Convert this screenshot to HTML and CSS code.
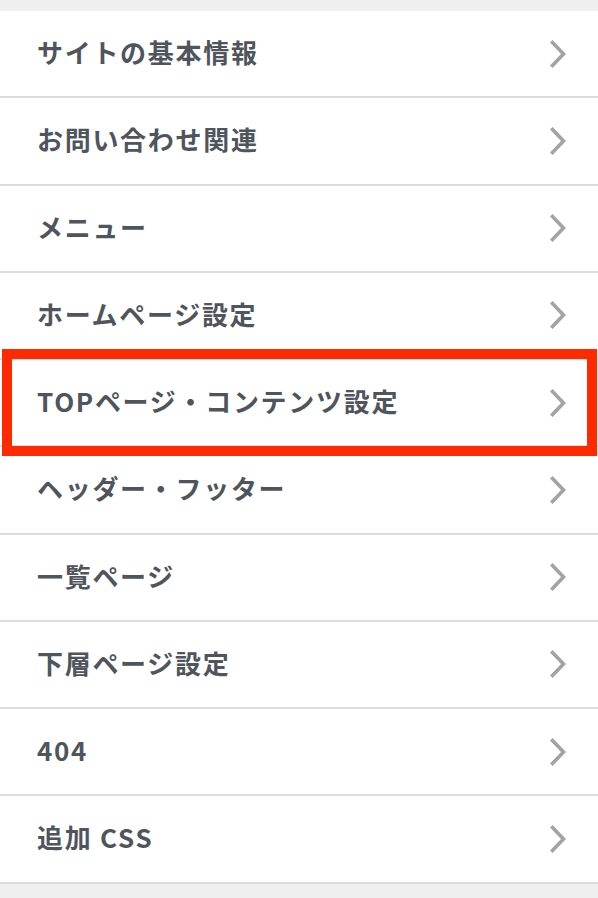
FILE: index.html
```html
<!DOCTYPE html>
<html lang="ja">
<head>
<meta charset="utf-8">
<title>設定メニュー</title>
<link rel="stylesheet" href="styles.css">
</head>
<body>
<ul class="menu">
  <li class="item"><span class="label">サイトの基本情報</span><svg class="chev" viewBox="0 0 16 28"><polyline points="2.5,2.5 13.5,14 2.5,25.5"/></svg></li>
  <li class="item"><span class="label">お問い合わせ関連</span><svg class="chev" viewBox="0 0 16 28"><polyline points="2.5,2.5 13.5,14 2.5,25.5"/></svg></li>
  <li class="item"><span class="label">メニュー</span><svg class="chev" viewBox="0 0 16 28"><polyline points="2.5,2.5 13.5,14 2.5,25.5"/></svg></li>
  <li class="item"><span class="label">ホームページ設定</span><svg class="chev" viewBox="0 0 16 28"><polyline points="2.5,2.5 13.5,14 2.5,25.5"/></svg></li>
  <li class="item highlighted"><span class="label">TOPページ・コンテンツ設定</span><svg class="chev" viewBox="0 0 16 28"><polyline points="2.5,2.5 13.5,14 2.5,25.5"/></svg><span class="mark"></span></li>
  <li class="item"><span class="label">ヘッダー・フッター</span><svg class="chev" viewBox="0 0 16 28"><polyline points="2.5,2.5 13.5,14 2.5,25.5"/></svg></li>
  <li class="item"><span class="label">一覧ページ</span><svg class="chev" viewBox="0 0 16 28"><polyline points="2.5,2.5 13.5,14 2.5,25.5"/></svg></li>
  <li class="item"><span class="label">下層ページ設定</span><svg class="chev" viewBox="0 0 16 28"><polyline points="2.5,2.5 13.5,14 2.5,25.5"/></svg></li>
  <li class="item"><span class="label">404</span><svg class="chev" viewBox="0 0 16 28"><polyline points="2.5,2.5 13.5,14 2.5,25.5"/></svg></li>
  <li class="item"><span class="label">追加 CSS</span><svg class="chev" viewBox="0 0 16 28"><polyline points="2.5,2.5 13.5,14 2.5,25.5"/></svg></li>
</ul>
</body>
</html>
```
FILE: styles.css
```css
html, body {
  margin: 0;
  padding: 0;
  background: #efefef;
  height: 100%;
}
body {
  padding-top: 11px;
  box-sizing: border-box;
  font-family: "Noto Sans CJK JP", "Noto Sans", sans-serif;
}
.menu {
  list-style: none;
  margin: 0;
  padding: 0;
  background: #ffffff;
}
.item {
  position: relative;
  display: flex;
  align-items: center;
  justify-content: space-between;
  height: 85.25px;
  box-sizing: border-box;
  height: 87.25px;
  padding: 0 32px 3px 37px;
  border-bottom: 2px solid #dcdcdc;
  background: #ffffff;
}
.label {
  font-size: 26px;
  font-weight: 700;
  letter-spacing: 1.7px;
  color: #4f555c;
  line-height: 1;
}
.chev {
  width: 16px;
  height: 28px;
  flex: none;
  margin-top: 3px;
}
.chev polyline {
  fill: none;
  stroke: #a3a3a4;
  stroke-width: 3.6;
  stroke-linecap: square;
  stroke-linejoin: miter;
}
.mark {
  position: absolute;
  z-index: 2;
  left: 2px;
  right: 1px;
  top: -11px;
  bottom: -11px;
  border: 10px solid #ff2a00;
  pointer-events: none;
}
```
